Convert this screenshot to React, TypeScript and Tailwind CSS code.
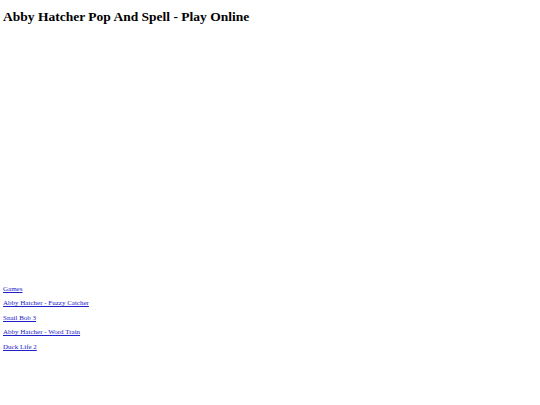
export default function App() {
  const links = ["Games", "Abby Hatcher - Fuzzy Catcher", "Snail Bob 3", "Abby Hatcher - Word Train", "Duck Life 2"];
  return (
    <div className="px-[3px] bg-white text-black" style={{ fontFamily: '"Liberation Serif", "Times New Roman", serif' }}>
      <h1 className="text-[13.5px] font-bold leading-[15px] pt-[9px] pb-[5px]">Abby Hatcher Pop And Spell - Play Online</h1>
      <div className="h-[256px]"></div>
      <div className="flex flex-col gap-[6px]">
        {links.map((l) => (
          <p key={l} className="text-[7px] leading-[8.4px]">
            <a href="#" className="text-[#2020c8] underline">{l}</a>
          </p>
        ))}
      </div>
    </div>
  );
}
